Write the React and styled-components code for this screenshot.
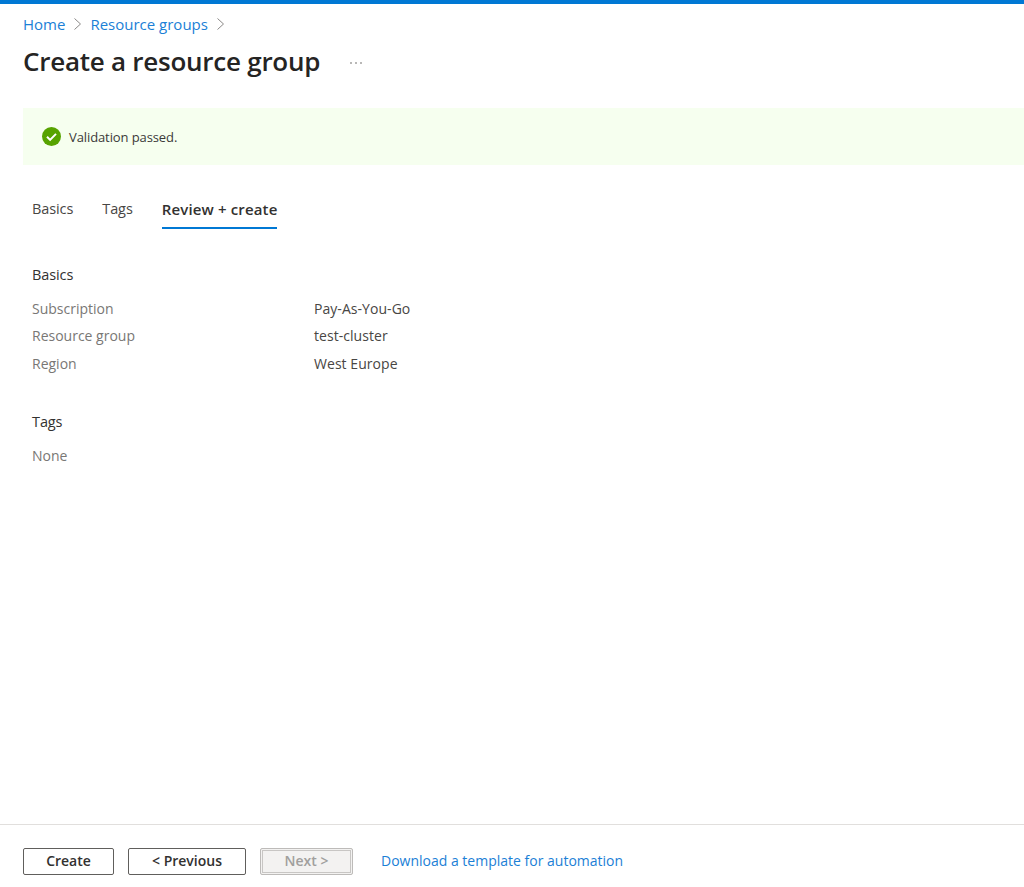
import styled, { createGlobalStyle } from 'styled-components';

const GlobalStyle = createGlobalStyle`
  html, body {
    margin: 0;
    padding: 0;
    background: #fff;
    font-family: "Open Sans", "Noto Sans", sans-serif;
    color: #323130;
  }
`;

const Page = styled.div`
  width: 1024px;
  height: 887px;
  display: flex;
  flex-direction: column;
  overflow: hidden;
`;

const TopBar = styled.div`
  height: 4px;
  background: #0078d4;
  flex: none;
`;

const Main = styled.div`
  flex: 1;
  padding-left: 23px;
`;

const Breadcrumb = styled.nav`
  display: flex;
  align-items: center;
  height: 22px;
  margin-top: 9px;
  font-size: 15px;
`;

const Link = styled.a`
  color: #1b80d6;
`;

const Chevron = styled.svg`
  width: 9px;
  height: 12px;
  margin: 0 ${(p) => p.$gap}px 0 8px;
  fill: none;
  stroke: #8a8886;
  stroke-width: 1;
`;

const TitleRow = styled.div`
  display: flex;
  align-items: center;
  height: 40px;
  margin-top: 6px;
`;

const Title = styled.h1`
  margin: 0;
  font-size: 26px;
  font-weight: 600;
  letter-spacing: -0.25px;
  color: #252423;
`;

const More = styled.svg`
  width: 14px;
  height: 4px;
  margin: 3px 0 0 29px;
  fill: #605e5c;
`;

const Banner = styled.div`
  display: flex;
  align-items: center;
  gap: 8px;
  height: 57px;
  margin-top: 27px;
  padding-left: 19px;
  background: #f6ffef;
  font-size: 13px;
  letter-spacing: -0.1px;
  color: #3b3a39;
`;

const Tabs = styled.div`
  display: flex;
  gap: 29px;
  height: 40px;
  margin-top: 24px;
  padding-left: 9px;
`;

const Tab = styled.div`
  height: 38px;
  line-height: 40px;
  font-size: ${(p) => (p.$active ? 15 : 14.5)}px;
  letter-spacing: ${(p) => (p.$active ? 0.15 : -0.1)}px;
  font-weight: ${(p) => (p.$active ? 600 : 400)};
  color: ${(p) => (p.$active ? '#323130' : '#484644')};
  border-bottom: 2px solid ${(p) => (p.$active ? '#0078d4' : 'transparent')};
`;

const Content = styled.div`
  padding-left: 9px;
`;

const SectionTitle = styled.div`
  height: 24px;
  line-height: 24px;
  margin-top: ${(p) => p.$top}px;
  margin-bottom: 8px;
  font-size: 14.5px;
  letter-spacing: -0.1px;
  color: #323130;
`;

const Row = styled.div`
  display: grid;
  grid-template-columns: 282px 1fr;
  height: 27.3px;
  line-height: 28px;
  font-size: 14px;
`;

const Label = styled.div`
  color: #797775;
`;

const Value = styled.div`
  color: #484644;
  letter-spacing: 0.05px;
`;

const Footer = styled.div`
  display: flex;
  align-items: center;
  flex: none;
  height: 62px;
  padding: 0 0 0 23px;
  border-top: 1px solid #e1dfdd;
  font-size: 14px;
`;

const Button = styled.button`
  box-sizing: border-box;
  width: ${(p) => p.$width}px;
  height: 27px;
  margin-right: 14px;
  margin-top: 10px;
  padding: 0 0 2px;
  background: #fff;
  border: 1px solid #605e5c;
  border-radius: 2px;
  font: 600 14px "Open Sans", "Noto Sans", sans-serif;
  color: #323130;

  &:disabled {
    background: #f3f2f1;
    border-color: #bdbbb9;
    box-shadow: inset 0 0 0 1px #f3f2f1, inset 0 0 0 2px #c8c6c4;
    color: #a19f9d;
  }
`;

const FooterLink = styled(Link)`
  margin: 8px 0 0 14px;
`;

const App = () => {
  return (
    <Page>
      <GlobalStyle />
      <TopBar />
      <Main>
        <Breadcrumb>
          <Link>Home</Link>
          <Chevron $gap={8} viewBox="0 0 9 12"><path d="M1.5 .5l6 5.5-6 5.5" /></Chevron>
          <Link>Resource groups</Link>
          <Chevron $gap={0} viewBox="0 0 9 12"><path d="M1.5 .5l6 5.5-6 5.5" /></Chevron>
        </Breadcrumb>
        <TitleRow>
          <Title>Create a resource group</Title>
          <More viewBox="0 0 14 4">
            <circle cx="2" cy="2" r="0.8" />
            <circle cx="7" cy="2" r="0.8" />
            <circle cx="12" cy="2" r="0.8" />
          </More>
        </TitleRow>
        <Banner>
          <svg width="19" height="19" viewBox="0 0 19 19">
            <circle cx="9.5" cy="9.5" r="9.5" fill="#57a300" />
            <path d="M5 9.8l3.1 3.1 5.9-6" fill="none" stroke="#fff" strokeWidth="2" />
          </svg>
          Validation passed.
        </Banner>
        <Tabs>
          <Tab>Basics</Tab>
          <Tab>Tags</Tab>
          <Tab $active>Review + create</Tab>
        </Tabs>
        <Content>
          <SectionTitle $top={34}>Basics</SectionTitle>
          <Row><Label>Subscription</Label><Value>Pay-As-You-Go</Value></Row>
          <Row><Label>Resource group</Label><Value>test-cluster</Value></Row>
          <Row><Label>Region</Label><Value>West Europe</Value></Row>
          <SectionTitle $top={33}>Tags</SectionTitle>
          <Row><Label>None</Label></Row>
        </Content>
      </Main>
      <Footer>
        <Button $width={91}>Create</Button>
        <Button $width={118}>&lt; Previous</Button>
        <Button $width={93} disabled>Next &gt;</Button>
        <FooterLink>Download a template for automation</FooterLink>
      </Footer>
    </Page>
  );
};

export default App;
